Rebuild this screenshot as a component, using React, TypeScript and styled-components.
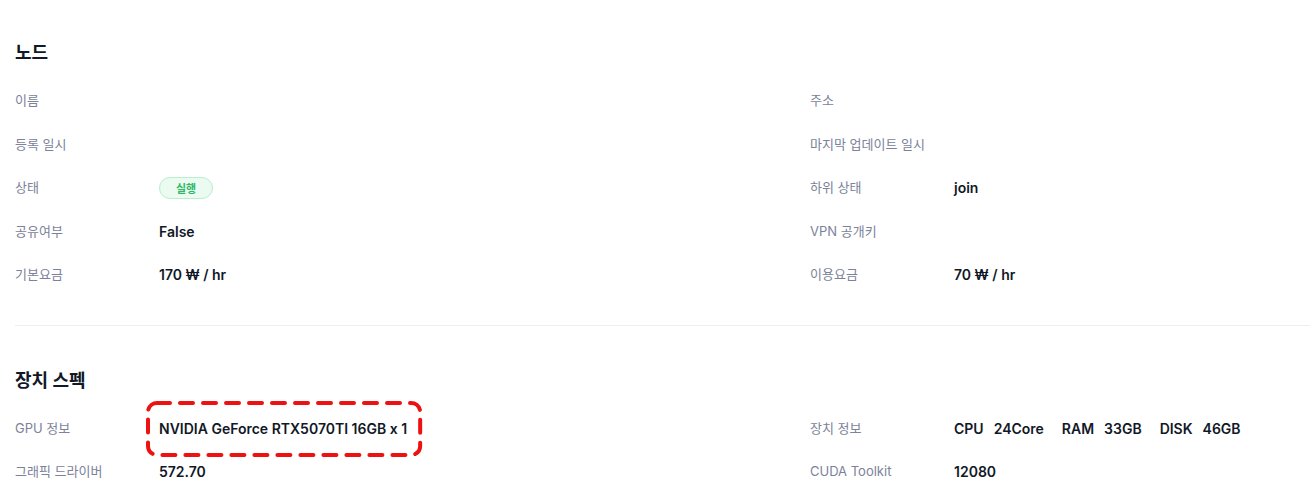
import React from "react";
import styled, { createGlobalStyle } from "styled-components";

const GlobalStyle = createGlobalStyle`
  body {
    margin: 0;
    background: #ffffff;
    font-family: Inter, "Noto Sans CJK KR", sans-serif;
  }
`;

interface Field {
  label: string;
  value?: React.ReactNode;
}

const nodeRows: [Field, Field][] = [
  [{ label: "이름" }, { label: "주소" }],
  [{ label: "등록 일시" }, { label: "마지막 업데이트 일시" }],
  [
    { label: "상태", value: <Badge>실행</Badge> },
    { label: "하위 상태", value: "join" },
  ],
  [
    { label: "공유여부", value: "False" },
    { label: "VPN 공개키" },
  ],
  [
    { label: "기본요금", value: "170 ₩ / hr" },
    { label: "이용요금", value: "70 ₩ / hr" },
  ],
];

const App: React.FC = () => {
  const specRows: [Field, Field][] = [
    [
      {
        label: "GPU 정보",
        value: (
          <Highlight>
            NVIDIA GeForce RTX5070TI 16GB x 1
            <DashFrame>
              <rect
                x="2"
                y="2"
                width="calc(100% - 4px)"
                height="calc(100% - 4px)"
                rx="9"
              />
            </DashFrame>
          </Highlight>
        ),
      },
      {
        label: "장치 정보",
        value: (
          <Specs>
            <SpecKey>CPU</SpecKey>
            <SpecVal>24Core</SpecVal>
            <SpecKey>RAM</SpecKey>
            <SpecVal>33GB</SpecVal>
            <SpecKey>DISK</SpecKey>
            <SpecVal>46GB</SpecVal>
          </Specs>
        ),
      },
    ],
    [
      { label: "그래픽 드라이버", value: "572.70" },
      { label: "CUDA Toolkit", value: "12080" },
    ],
  ];

  return (
    <>
      <GlobalStyle />
      <Page>
        <Section>
          <Heading>노드</Heading>
          <Grid>
            {nodeRows.map((pair, i) =>
              pair.map((f, j) => (
                <Row key={`${i}-${j}`}>
                  <Label>{f.label}</Label>
                  <Value>{f.value}</Value>
                </Row>
              ))
            )}
          </Grid>
        </Section>
        <Divider />
        <Section>
          <Heading>장치 스펙</Heading>
          <Grid>
            {specRows.map((pair, i) =>
              pair.map((f, j) => (
                <Row key={`${i}-${j}`}>
                  <Label>{f.label}</Label>
                  <Value>{f.value}</Value>
                </Row>
              ))
            )}
          </Grid>
        </Section>
      </Page>
    </>
  );
};

const Page = styled.div`
  padding: 36px 0 0 15px;
`;

const Section = styled.section`
  display: flex;
  flex-direction: column;
`;

const Heading = styled.h2`
  margin: 0 0 9px;
  font-size: 18px;
  font-weight: 700;
  line-height: 34px;
  color: #111827;
`;

const Grid = styled.div`
  display: grid;
  grid-template-columns: 795px 1fr;
`;

const Row = styled.div`
  display: flex;
  align-items: center;
  height: 43.5px;
`;

const Label = styled.div`
  width: 144px;
  flex-shrink: 0;
  font-size: 13px;
  color: #7b8299;
  margin-top: -2px;
`;

const Value = styled.div`
  font-size: 14px;
  font-weight: 600;
  color: #111827;
`;

function Badge({ children }: { children: React.ReactNode }) {
  return <BadgePill>{children}</BadgePill>;
}

const BadgePill = styled.span`
  display: inline-flex;
  align-items: center;
  justify-content: center;
  height: 20px;
  padding: 0 16px;
  border-radius: 999px;
  background: #ecfbf2;
  border: 1px solid #b9efcc;
  color: #2fb866;
  font-size: 11px;
  font-weight: 600;
`;

const Highlight = styled.span`
  position: relative;
  display: inline-block;
`;

const DashFrame = styled.svg`
  position: absolute;
  left: -13px;
  top: -19px;
  width: calc(100% + 28px);
  height: 56px;
  overflow: visible;

  rect {
    fill: none;
    stroke: #ee1111;
    stroke-width: 4;
    stroke-dasharray: 13 10;
    stroke-linecap: round;
  }
`;

const Specs = styled.div`
  display: flex;
  align-items: center;
`;

const SpecKey = styled.span`
  margin-right: 10px;
`;

const SpecVal = styled.span`
  margin-right: 18px;
`;

const Divider = styled.hr`
  margin: 28px 0 38px;
  border: none;
  border-top: 1px solid #eceef2;
`;

export default App;
